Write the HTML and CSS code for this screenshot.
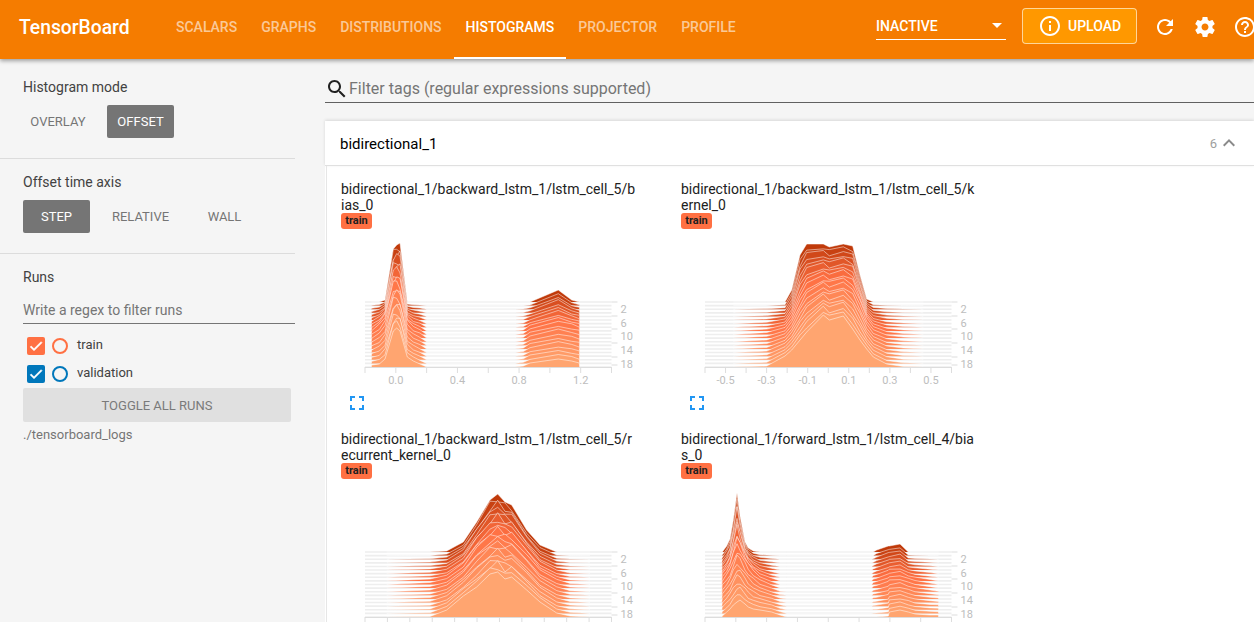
FILE: index.html
```html
<!DOCTYPE html>
<html lang="en">
<head>
    <meta charset="UTF-8">
    <title>TensorBoard</title>
    <link rel="stylesheet" href="styles.css">
    <script src="chart.js" defer></script>
</head>
<body>
    <!-- Top bar -->
    <div class="topbar">
        <div class="brand">TensorBoard</div>
        <div class="tabs">
            <a class="tab">Scalars</a>
            <a class="tab">Graphs</a>
            <a class="tab">Distributions</a>
            <a class="tab active">Histograms</a>
            <a class="tab">Projector</a>
            <a class="tab">Profile</a>
        </div>
        <div class="inactive-select">
            <span>INACTIVE</span>
            <span class="caret"></span>
        </div>
        <div class="upload-btn">
            <svg class="icon-24" viewBox="0 0 24 24"><path d="M11 17h2v-6h-2v6zm1-15C6.48 2 2 6.48 2 12s4.48 10 10 10 10-4.48 10-10S17.52 2 12 2zm0 18c-4.41 0-8-3.59-8-8s3.59-8 8-8 8 3.59 8 8-3.59 8-8 8zM11 9h2V7h-2v2z"/></svg>
            <span>UPLOAD</span>
        </div>
        <div class="icon-btn"><svg class="icon-24" viewBox="0 0 24 24"><path d="M17.65 6.35C16.2 4.9 14.21 4 12 4c-4.42 0-7.99 3.58-7.99 8s3.57 8 7.99 8c3.73 0 6.84-2.55 7.73-6h-2.08c-.82 2.33-3.04 4-5.65 4-3.31 0-6-2.69-6-6s2.69-6 6-6c1.66 0 3.14.69 4.22 1.78L13 11h7V4l-2.35 2.35z"/></svg></div>
        <div class="icon-btn"><svg class="icon-24" viewBox="0 0 24 24"><path d="M19.43 12.98c.04-.32.07-.64.07-.98s-.03-.66-.07-.98l2.11-1.65c.19-.15.24-.42.12-.64l-2-3.46c-.12-.22-.39-.3-.61-.22l-2.49 1c-.52-.4-1.08-.73-1.69-.98l-.38-2.65C14.46 2.18 14.25 2 14 2h-4c-.25 0-.46.18-.49.42l-.38 2.65c-.61.25-1.17.59-1.69.98l-2.49-1c-.23-.09-.49 0-.61.22l-2 3.46c-.13.22-.07.49.12.64l2.11 1.65c-.04.32-.07.65-.07.98s.03.66.07.98l-2.11 1.65c-.19.15-.24.42-.12.64l2 3.46c.12.22.39.3.61.22l2.49-1c.52.4 1.08.73 1.69.98l.38 2.65c.03.24.24.42.49.42h4c.25 0 .46-.18.49-.42l.38-2.65c.61-.25 1.17-.59 1.69-.98l2.49 1c.23.09.49 0 .61-.22l2-3.46c.12-.22.07-.49-.12-.64l-2.11-1.65zM12 15.5c-1.93 0-3.5-1.57-3.5-3.5s1.57-3.5 3.5-3.5 3.5 1.57 3.5 3.5-1.57 3.5-3.5 3.5z"/></svg></div>
        <div class="icon-btn"><svg class="icon-24" viewBox="0 0 24 24"><path d="M11 18h2v-2h-2v2zm1-16C6.48 2 2 6.48 2 12s4.48 10 10 10 10-4.48 10-10S17.52 2 12 2zm0 18c-4.41 0-8-3.59-8-8s3.59-8 8-8 8 3.59 8 8-3.59 8-8 8zm0-14c-2.21 0-4 1.79-4 4h2c0-1.1.9-2 2-2s2 .9 2 2c0 2-3 1.75-3 5h2c0-2.25 3-2.5 3-5 0-2.21-1.79-4-4-4z"/></svg></div>
    </div>

    <div class="layout">
        <!-- Sidebar -->
        <div class="sidebar">
            <div class="side-section mode-section">
                <div class="side-title">Histogram mode</div>
                <div class="btn-row">
                    <div class="toggle toggle-wide">OVERLAY</div>
                    <div class="toggle selected">OFFSET</div>
                </div>
            </div>
            <div class="side-section axis-section">
                <div class="side-title">Offset time axis</div>
                <div class="btn-row">
                    <div class="toggle selected">STEP</div>
                    <div class="toggle">RELATIVE</div>
                    <div class="toggle">WALL</div>
                </div>
            </div>
            <div class="runs-section">
                <div class="side-title">Runs</div>
                <div class="runs-filter">Write a regex to filter runs</div>
                <div class="run-list">
                    <div class="run-row">
                        <span class="run-check check-train"><svg viewBox="0 0 24 24"><path d="M9 16.2L4.8 12l-1.4 1.4L9 19 21 7l-1.4-1.4z"/></svg></span>
                        <span class="run-dot dot-train"></span>
                        <span class="run-name">train</span>
                    </div>
                    <div class="run-row">
                        <span class="run-check check-validation"><svg viewBox="0 0 24 24"><path d="M9 16.2L4.8 12l-1.4 1.4L9 19 21 7l-1.4-1.4z"/></svg></span>
                        <span class="run-dot dot-validation"></span>
                        <span class="run-name">validation</span>
                    </div>
                </div>
                <div class="toggle-all">TOGGLE ALL RUNS</div>
                <div class="log-dir">./tensorboard_logs</div>
            </div>
        </div>

        <!-- Main content -->
        <div class="main">
            <div class="tag-filter">
                <svg class="search-icon" viewBox="0 0 24 24"><path d="M15.5 14h-.79l-.28-.27C15.41 12.59 16 11.11 16 9.5 16 5.91 13.09 3 9.5 3S3 5.91 3 9.5 5.91 16 9.5 16c1.61 0 3.09-.59 4.23-1.57l.27.28v.79l5 4.99L20.49 19l-4.99-5zm-6 0C7.01 14 5 11.99 5 9.5S7.01 5 9.5 5 14 7.01 14 9.5 11.99 14 9.5 14z"/></svg>
                <span>Filter tags (regular expressions supported)</span>
            </div>
            <div class="category">
                <div class="category-head">
                    <span class="category-name">bidirectional_1</span>
                    <span class="category-count">6</span>
                    <svg class="chevron" viewBox="0 0 24 24"><path d="M12 8l-6 6 1.41 1.41L12 10.83l4.59 4.58L18 14z"/></svg>
                </div>
                <div class="card-grid">
                    <div class="card">
                        <div class="card-title">bidirectional_1/backward_lstm_1/lstm_cell_5/bias_0</div>
                        <span class="run-tag">train</span>
                        <svg class="hist" data-chart="bias5"></svg>
                        <svg class="fullscreen" viewBox="0 0 24 24"><path d="M7 14H5v5h5v-2H7v-3zm-2-4h2V7h3V5H5v5zm12 7h-3v2h5v-5h-2v3zM14 5v2h3v3h2V5h-5z"/></svg>
                    </div>
                    <div class="card">
                        <div class="card-title">bidirectional_1/backward_lstm_1/lstm_cell_5/kernel_0</div>
                        <span class="run-tag">train</span>
                        <svg class="hist" data-chart="kernel5"></svg>
                        <svg class="fullscreen" viewBox="0 0 24 24"><path d="M7 14H5v5h5v-2H7v-3zm-2-4h2V7h3V5H5v5zm12 7h-3v2h5v-5h-2v3zM14 5v2h3v3h2V5h-5z"/></svg>
                    </div>
                    <div class="card">
                        <div class="card-title">bidirectional_1/backward_lstm_1/lstm_cell_5/recurrent_kernel_0</div>
                        <span class="run-tag">train</span>
                        <svg class="hist" data-chart="recurrent5"></svg>
                    </div>
                    <div class="card">
                        <div class="card-title">bidirectional_1/forward_lstm_1/lstm_cell_4/bias_0</div>
                        <span class="run-tag">train</span>
                        <svg class="hist" data-chart="bias4"></svg>
                    </div>
                </div>
            </div>
        </div>
    </div>
</body>
</html>
```

FILE: styles.css
```css
* {
    margin: 0;
    padding: 0;
    box-sizing: border-box;
}

html, body {
    height: 622px;
    overflow: hidden;
}

body {
    font-family: Roboto, sans-serif;
    background: #f5f5f5;
    color: #424242;
}

/* Top bar */
.topbar {
    position: relative;
    z-index: 5;
    height: 59px;
    display: flex;
    align-items: center;
    background: #f57c00;
    color: white;
    box-shadow: 0 2px 4px rgba(0, 0, 0, 0.35);
}

.topbar > * {
    flex-shrink: 0;
}

.brand {
    width: 164px;
    padding-left: 19px;
    font-size: 19.3px;
    font-weight: 500;
    margin-top: -5px;
}

.tabs {
    display: flex;
    height: 59px;
    width: 712px;
}

.tab {
    height: 59px;
    padding: 0 12px 6px;
    display: flex;
    align-items: center;
    font-size: 14px;
    font-weight: 500;
    text-transform: uppercase;
    color: rgba(255, 255, 255, 0.6);
}

.tab.active {
    color: white;
    border-bottom: 2px solid white;
    padding-bottom: 4px;
}

.inactive-select {
    width: 130px;
    height: 27px;
    margin-top: -7px;
    display: flex;
    justify-content: space-between;
    align-items: center;
    border-bottom: 1px solid white;
    font-size: 14px;
    font-weight: 500;
    padding-right: 4px;
}

.caret {
    width: 0;
    height: 0;
    border-left: 5px solid transparent;
    border-right: 5px solid transparent;
    border-top: 5px solid white;
}

.upload-btn {
    width: 115px;
    height: 36px;
    margin: -7px 8px 0 16px;
    padding-left: 15px;
    display: flex;
    align-items: center;
    gap: 6px;
    background: #ff9800;
    border: 1px solid rgba(255, 255, 255, 0.6);
    border-radius: 4px;
    font-size: 14px;
    font-weight: 500;
}

.icon-btn {
    width: 40px;
    height: 40px;
    margin-top: -6px;
    display: flex;
    align-items: center;
    justify-content: center;
}

.icon-24 {
    width: 24px;
    height: 24px;
    fill: white;
    flex-shrink: 0;
}

/* Page layout */
.layout {
    display: flex;
    height: 563px;
}

.sidebar {
    width: 325px;
    flex-shrink: 0;
    font-size: 14px;
}

.side-section {
    width: 295px;
    padding-left: 23px;
    border-bottom: 1px solid #dcdcdc;
}

.mode-section {
    height: 100px;
    padding-top: 20px;
}

.axis-section {
    height: 95px;
    padding-top: 15px;
}

.side-title {
    line-height: 16px;
    color: #424242;
}

.btn-row {
    display: flex;
    gap: 17px;
    margin-top: 10px;
}

.toggle {
    width: 67px;
    height: 33px;
    display: flex;
    align-items: center;
    justify-content: center;
    font-size: 13px;
    color: #757575;
    border-radius: 2px;
}

.toggle-wide {
    padding-left: 3px;
}

.toggle.selected {
    background: #757575;
    color: white;
}

.runs-section {
    width: 295px;
    padding: 15px 0 0 23px;
}

.runs-filter {
    margin-top: 16px;
    height: 23px;
    font-size: 14px;
    line-height: 18px;
    color: #757575;
    border-bottom: 1px solid #757575;
}

.run-list {
    display: flex;
    flex-direction: column;
    gap: 10px;
    margin-top: 13px;
}

.run-row {
    height: 18px;
    padding-left: 4px;
    display: flex;
    align-items: center;
    font-size: 13px;
    color: #424242;
}

.run-check {
    width: 18px;
    height: 18px;
    border-radius: 2px;
    display: flex;
    align-items: center;
    justify-content: center;
}

.run-check svg {
    width: 16px;
    height: 16px;
    fill: white;
    stroke: white;
    stroke-width: 1;
}

.check-train { background: #ff7043; }
.check-validation { background: #0077bb; }

.run-dot {
    width: 16px;
    height: 16px;
    margin-left: 7px;
    border-radius: 50%;
    border: 2px solid;
}

.dot-train { border-color: #ff7043; }
.dot-validation { border-color: #0077bb; }

.run-name {
    margin-left: 9px;
    margin-top: -3px;
}

.toggle-all {
    width: 268px;
    height: 34px;
    margin-top: 5px;
    display: flex;
    align-items: center;
    justify-content: center;
    background: #e0e0e0;
    border-radius: 2px;
    font-size: 13px;
    color: #7a7a7a;
}

.log-dir {
    margin-top: 5px;
    font-size: 13px;
    line-height: 16px;
    color: #757575;
}

/* Main content */
.main {
    flex: 1;
    min-width: 0;
}

.tag-filter {
    height: 44px;
    display: flex;
    align-items: center;
    padding-top: 16px;
    font-size: 16px;
    color: #757575;
    border-bottom: 1px solid #616161;
}

.search-icon {
    width: 24px;
    height: 24px;
    fill: #212121;
}

.category {
    margin-top: 18px;
    height: 510px;
    background: white;
}

.category-head {
    height: 45px;
    display: flex;
    align-items: center;
    padding: 0 13px 0 15px;
    border-bottom: 1px solid #e0e0e0;
    box-shadow: 0 -1px 3px rgba(0, 0, 0, 0.12);
}

.category-name {
    flex: 1;
    margin-top: 1px;
    font-size: 15px;
    color: black;
}

.category-count {
    font-size: 13px;
    color: #9e9e9e;
}

.chevron {
    width: 24px;
    height: 24px;
    fill: #8a8a8a;
}

.card-grid {
    height: 465px;
    display: flex;
    flex-wrap: wrap;
    align-content: flex-start;
    padding: 15px 0 0 15px;
    border-left: 1px solid #e6e6e6;
    margin-left: 1px;
}

.card {
    width: 340px;
    height: 250px;
    margin-left: -1px;
    margin-right: 1px;
    color: #212121;
}

.card-title {
    width: 295px;
    font-size: 14px;
    line-height: 16px;
    word-break: break-all;
}

.run-tag {
    display: block;
    width: 31px;
    height: 16px;
    background: #ff7043;
    border-radius: 3px;
    font-size: 11px;
    font-weight: 700;
    line-height: 15px;
    text-align: center;
    color: #212121;
}

.hist {
    display: block;
    width: 300px;
    height: 155px;
    margin-top: 3px;
}

.hist text {
    font-family: Roboto, sans-serif;
    font-size: 11px;
    fill: #bdbdbd;
}

.fullscreen {
    display: block;
    width: 24px;
    height: 24px;
    margin: 4px 0 0 4px;
    fill: #2196f3;
}
```

FILE: chart.js
```js
// Offset histograms: each chart is drawn from three key ridges (back, middle, front)
var CHARTS = {
    bias5: {
        ticks: 8, wobble: 0.07, labels: {1: "0.0", 3: "0.4", 5: "0.8", 7: "1.2"},
        pts: [[124,0,0,0],[125,0,4,2],[148,0,10,3],[165,2,18,8],[190,53,50,36],[200,57,52,39],[210,59,48,36],[232,0,14,10],[250,0,8,6],[270,0,5,3],[290,0,0,0],
              [555,0,0,0],[580,0,1,1],[600,0,6,4],[685,12,13,8],[725,2,10,6],[748,0,8,4],[749,0,0,0]]
    },
    kernel5: {
        ticks: 12, wobble: 0.025, labels: {1: "-0.5", 3: "-0.3", 5: "-0.1", 7: "0.1", 9: "0.3", 11: "0.5"},
        pts: [[190,0,0,0],[290,0,2,1],[345,0,7,11],[365,12,16,17],[390,47,34,27],[410,58,46,35],[460,58,55,52],[478,55,52,47],[520,58,56,51],[548,56,50,38],[570,27,34,27],[590,3,17,18],[610,0,8,10],[650,0,3,3],[700,0,1,0.5],[760,0,0,0]]
    },
    recurrent5: {
        ticks: 11, wobble: 0.06, labels: {},
        pts: [[170,0,0,0],[300,0,2,0.5],[350,1,6,7],[400,10,18,21],[440,30,36,30],[480,52,47,43],[503,58,51,45],[525,50,48,38],[545,47,46,40],[590,22,30,27],[630,7,14,15],[680,0,5,4],[720,0,1,1],[780,0,0,0]]
    },
    bias4: {
        ticks: 8, wobble: 0.07, labels: {},
        pts: [[155,0,0,0],[157,0,8,1],[170,6,14,5],[180,13,20,8],[190,32,30,12],[201,59,40,15],[210,36,36,17],[225,10,26,13],[235,4,20,10],[250,1,14,8],[270,0,8,7],[305,0,3,5],[330,0,0,2],[350,0,0,0],
              [605,0,0,0],[610,0,2,0],[620,2,3,0],[655,6,7,1],[658,6,8,5],[690,8,9,7],[715,0,6,5],[735,0,4,3],[780,0,1.5,2],[805,0,0,2],[806,0,0,0]]
    }
};

var AXIS_LEFT = 24, AXIS_WIDTH = 246.5;
var BACK_Y = 70, FRONT_Y = 135, LAYERS = 19;
var COLORS = [[192, 58, 10], [255, 112, 67], [255, 165, 112]];
var KNEE = 0.42;

function mix(a, b, t) {
    return a + (b - a) * t;
}

function layerColor(t) {
    var from = t < KNEE ? COLORS[0] : COLORS[1];
    var to = t < KNEE ? COLORS[1] : COLORS[2];
    var k = t < KNEE ? t / KNEE : (t - KNEE) / (1 - KNEE);
    return "rgb(" + from.map(function (c, i) { return Math.round(mix(c, to[i], k)); }).join(",") + ")";
}

function ridgeHeight(p, t, i, wobble) {
    var h = t < 0.5 ? mix(p[1], p[2], t * 2) : mix(p[2], p[3], (t - 0.5) * 2);
    // small wobble so the ridges don't look too regular
    if (i > 0 && i < LAYERS - 1) {
        h *= 1 + wobble * Math.sin(i * 2.3 + p[0] * 0.13);
    }
    return h;
}

function el(name, attrs, text) {
    var node = document.createElementNS("http://www.w3.org/2000/svg", name);
    for (var key in attrs) node.setAttribute(key, attrs[key]);
    if (text) node.textContent = text;
    return node;
}

function drawChart(svg, chart) {
    svg.setAttribute("viewBox", "0 0 300 155");
    var right = AXIS_LEFT + AXIS_WIDTH;

    for (var i = 0; i < LAYERS; i++) {
        var t = i / (LAYERS - 1);
        var base = mix(BACK_Y, FRONT_Y, t);
        svg.appendChild(el("line", {x1: AXIS_LEFT, x2: right, y1: base, y2: base, stroke: "#eeeeee", "stroke-width": 1.6}));

        var top = chart.pts.map(function (p) {
            var x = (p[0] - 105) / 3 + AXIS_LEFT;
            return x.toFixed(1) + "," + (base - ridgeHeight(p, t, i, chart.wobble)).toFixed(1);
        });
        var first = top[0].split(",")[0], last = top[top.length - 1].split(",")[0];
        svg.appendChild(el("polygon", {
            points: first + "," + base + " " + top.join(" ") + " " + last + "," + base,
            fill: layerColor(t)
        }));
        svg.appendChild(el("polyline", {
            points: top.join(" "), fill: "none", stroke: "#fff", "stroke-opacity": 0.5, "stroke-width": 1
        }));
    }

    // y axis
    [70, 84, 97, 111, 125, 133].forEach(function (y) {
        svg.appendChild(el("line", {x1: right, x2: right + 6, y1: y, y2: y, stroke: "#ddd"}));
    });
    [["2", 81], ["6", 95], ["10", 108], ["14", 122], ["18", 136]].forEach(function (l) {
        svg.appendChild(el("text", {x: right + 9, y: l[1]}, l[0]));
    });

    // x axis
    svg.appendChild(el("line", {x1: AXIS_LEFT, x2: right, y1: FRONT_Y + 0.5, y2: FRONT_Y + 0.5, stroke: "#ddd"}));
    for (var k = 0; k <= chart.ticks; k++) {
        var x = AXIS_LEFT + AXIS_WIDTH * k / chart.ticks;
        svg.appendChild(el("line", {x1: x, x2: x, y1: FRONT_Y, y2: FRONT_Y + 6, stroke: "#ddd"}));
        if (chart.labels[k]) {
            svg.appendChild(el("text", {x: x, y: FRONT_Y + 17, "text-anchor": "middle"}, chart.labels[k]));
        }
    }
}

document.querySelectorAll(".hist").forEach(function (svg) {
    drawChart(svg, CHARTS[svg.getAttribute("data-chart")]);
});
```
